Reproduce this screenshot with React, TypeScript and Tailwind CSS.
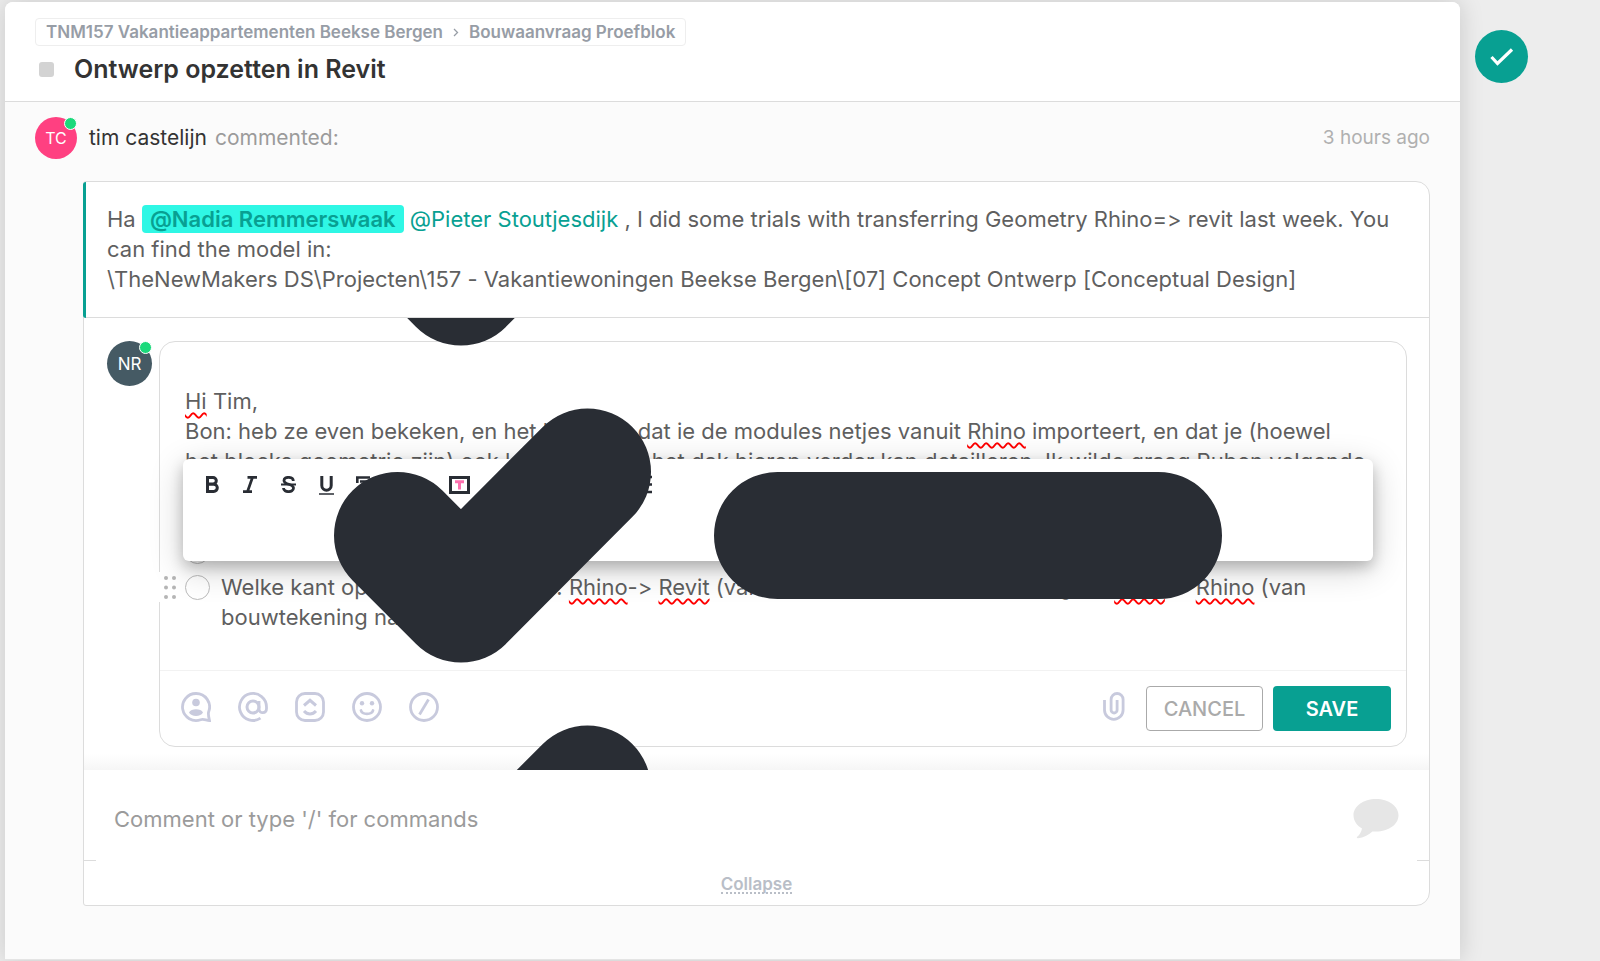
import React from 'react';

const Avatar: React.FC<{ initials: string; className: string }> = ({ initials, className }) => (
  <div className={`relative flex shrink-0 items-center justify-center rounded-full text-white ${className}`}>
    {initials}
    <span className="absolute top-0 right-0 size-[13px] rounded-full border border-white bg-[#1bd97b]" />
  </div>
);

const Misspelled: React.FC<{ children: React.ReactNode }> = ({ children }) => (
  <span className="underline decoration-[#ff0000] decoration-wavy decoration-2 underline-offset-3 [text-decoration-skip-ink:none]">
    {children}
  </span>
);

const CheckItem: React.FC<{ label: string; children?: React.ReactNode }> = ({ label, children }) => (
  <div className="flex min-h-[30px] items-start">
    <input
      type="checkbox"
      aria-label={label}
      className="mt-[3px] size-[25px] shrink-0 appearance-none rounded-full border border-[#bbbbbb] bg-white"
    />
    <div className="ml-[11px]">{children}</div>
  </div>
);

const icons = [
  {
    name: 'Assign',
    drawing: (
      <>
        <path d="M15 1.5a13.5 13.5 0 1 0 4.6 26.2c2.6-1 5 .4 8.9.8-.8-3-1.6-6-.9-8.500A13.5 13.5 0 0 0 15 1.5Z" strokeWidth="2.8" />
        <circle cx="15" cy="10.5" r="3.8" fill="currentColor" stroke="none" />
        <path d="M8 20.500c2-4.300 12-4.300 14 0-2 4.500-12 4.500-14 0Z" fill="currentColor" stroke="none" />
      </>
    ),
  },
  {
    name: 'Mention',
    drawing: (
      <>
        <circle cx="15" cy="15" r="6" strokeWidth="3" />
        <path d="M21 9v8c0 5 7.5 5 7.5-.5V15A13.5 13.5 0 1 0 22.5 26.2" strokeWidth="2.8" />
      </>
    ),
  },
  {
    name: 'Link task',
    drawing: (
      <>
        <rect x="1.5" y="1.5" width="27" height="27" rx="8.5" strokeWidth="2.8" />
        <path d="m9 13.500 6-5.200 6 5.200M9 19c3.500 4 8.500 4 12 0" strokeWidth="3" />
      </>
    ),
  },
  {
    name: 'Emoji',
    drawing: (
      <>
        <circle cx="15" cy="15" r="13.5" strokeWidth="2.8" />
        <circle cx="10" cy="11.3" r="2.2" fill="currentColor" stroke="none" />
        <circle cx="20" cy="11.3" r="2.2" fill="currentColor" stroke="none" />
        <path d="M9 18.500c1.200 4.400 10.800 4.400 12 0" strokeWidth="2.8" strokeLinecap="round" />
      </>
    ),
  },
  {
    name: 'Slash commands',
    drawing: (
      <>
        <circle cx="15" cy="15" r="13.5" strokeWidth="2.8" />
        <path d="m10.500 22.500 9-15" strokeWidth="2.8" />
      </>
    ),
  },
];

const toolButton = 'flex h-[51px] w-[38px] items-center justify-center';

const FormatToolbar: React.FC = () => (
  <div className="absolute top-[141px] right-14 left-[99px] flex h-[102px] items-start rounded-md bg-white pl-[10px] text-[#292d34] shadow-[0_8px_34px_rgba(0,0,0,0.2),0_6px_14px_rgba(0,0,0,0.2)]">
    <button aria-label="Bold" className={toolButton}>
      <svg width="14" height="17" viewBox="0 0 14 17" fill="none" stroke="currentColor" strokeWidth="3">
        <path d="M2.500 1.500h5.500a3.300 3.300 0 0 1 0 6.600H2.500M2.500 8.200h6.200a3.500 3.500 0 0 1 0 7.200H2.500M2.500 0v17" />
      </svg>
    </button>
    <button aria-label="Italic" className={toolButton}>
      <svg width="14" height="17" viewBox="0 0 14 17" fill="none" stroke="currentColor" strokeWidth="2.8">
        <path d="M4.500 1.400H14M0 15.600h9M9.500 1.400l-5 14.200" />
      </svg>
    </button>
    <button aria-label="Strikethrough" className={toolButton}>
      <svg width="15" height="17" viewBox="0 0 15 17" fill="none" stroke="currentColor">
        <path d="M12.300 5c0-4.700-9.300-4.800-9.300-.6 0 4.600 9.500 3.100 9.500 7.700 0 4.700-10 4.700-10 0" strokeWidth="2.8" />
        <path d="M0 8.500h15" strokeWidth="2" />
      </svg>
    </button>
    <button aria-label="Underline" className={toolButton}>
      <svg width="15" height="20" viewBox="0 0 15 20" fill="none" stroke="currentColor">
        <path d="M2.800 1v9.500c0 6.200 9.400 6.200 9.400 0V1" strokeWidth="3" />
        <path d="M0 19h15" strokeWidth="1.5" />
      </svg>
    </button>
    <button aria-label="Code block" className={toolButton}>
      <svg width="16" height="18" viewBox="0 0 16 18" fill="none" stroke="currentColor" strokeWidth="2.6">
        <path d="M0 1.500h14M4 5.500h10M1.300 1v6" />
      </svg>
    </button>
    <button aria-label="Text color" className="ml-[57px] flex h-[51px] w-[38px] items-center justify-center">
      <svg width="21" height="18" viewBox="0 0 21 18" fill="none">
        <rect x="1.5" y="1.5" width="18" height="15" stroke="currentColor" strokeWidth="3" />
        <path d="M6 5.700h9M10.500 4.500v9" stroke="#fd71af" strokeWidth="3" />
      </svg>
    </button>
    <button aria-label="List" className="ml-[145px] flex h-[51px] w-[38px] items-center justify-center">
      <svg width="20" height="19" viewBox="0 0 20 19" stroke="currentColor" strokeWidth="2.6">
        <path d="M0 2h20M0 9.500h20M0 17h20" />
      </svg>
    </button>
  </div>
);

// Checklist glyph drawn far larger than its button, cut off by the thread's edges
const ChecklistGlyph: React.FC = () => (
  <svg
    className="pointer-events-none absolute inset-0 size-full text-[#292d34]"
    fill="none"
    stroke="currentColor"
    strokeWidth="127"
    strokeLinecap="round"
    strokeLinejoin="round"
  >
    <path d="M313.500-99.500 377-36l126.500-127" />
    <path d="M313.500 217.500 377 281l126.500-127M693.500 217.500h381" />
    <path d="M313.500 534.500 377 598l126.500-127" />
  </svg>
);

const App: React.FC = () => {
  return (
    <div className="flex min-h-screen bg-[#ededed] pt-0.5 pb-px pl-[5px] font-['Inter',sans-serif] text-[22px] leading-[30px] text-[#5f5f5f] [font-feature-settings:'calt'_0]">
      <main className="min-w-0 flex-1 rounded-t-lg border-b border-[#e4e4e4] bg-[#fbfbfb] shadow-[0_0_24px_rgba(0,0,0,0.16)]">
        <header className="rounded-t-lg border-b border-[#dcdcdc] bg-white px-[30px] pt-4 pb-4">
          <nav className="flex h-7 w-fit items-center gap-[10px] rounded border border-[#eeeeee] px-[10px] text-[17px] font-semibold text-[#979da6]">
            <a href="#project">TNM157 Vakantieappartementen Beekse Bergen</a>
            <svg width="6" height="9" viewBox="0 0 6 9" fill="none" stroke="currentColor" strokeWidth="1.3">
              <path d="m1 1 3.500 3.500L1 8" />
            </svg>
            <a href="#list">Bouwaanvraag Proefblok</a>
          </nav>
          <div className="mt-[7px] flex h-8 items-center gap-5 pl-1">
            <span className="size-[15px] rounded-[3px] bg-[#d3d3d3]" />
            <h1 className="text-[25px] font-semibold text-[#333333]">Ontwerp opzetten in Revit</h1>
          </div>
        </header>

        <div className="flex items-center px-[30px] pt-[15px] pb-[22px] text-[21px]">
          <Avatar initials="TC" className="size-[42px] bg-[#ff4081] text-[16px]" />
          <span className="ml-3 text-[#333333]">tim castelijn</span>
          <span className="ml-2 text-[#9b9b9b]">commented:</span>
          <time className="ml-auto text-[19px] text-[#b0b0b0]">3 hours ago</time>
        </div>

        <section className="mr-[30px] mb-[53px] ml-[78px] rounded-l-[3px] rounded-r-[14px] border border-[#dcdcdc] bg-white">
          <div className="-ml-px rounded-l-[3px] rounded-tr-[14px] border-l-3 border-[#08a092]">
            <div className="border-b border-[#dcdcdc] pt-[22px] pr-5 pb-[23px] pl-[21px]">
              <p>
                Ha{' '}
                <a href="#nadia" className="rounded bg-[#2ff7e5] px-2 py-px font-semibold text-[#08a092]">
                  @Nadia Remmerswaak
                </a>{' '}
                <a href="#pieter" className="text-[#08a092]">
                  @Pieter Stoutjesdijk
                </a>{' '}
                , I did some trials with transferring Geometry Rhino=&gt; revit last week. You
                <br />
                can find the model in:
              </p>
              <p>\TheNewMakers DS\Projecten\157 - Vakantiewoningen Beekse Bergen\[07] Concept Ontwerp [Conceptual Design]</p>
            </div>
          </div>

          <div className="relative flex items-start overflow-hidden bg-[linear-gradient(to_top,#f6f6f6,#ffffff_16px)] py-[23px] pr-[22px] pl-[23px]">
            <Avatar initials="NR" className="size-[45px] bg-[#455a64] text-[17px]" />

            <div className="ml-[7px] min-w-0 flex-1 rounded-[16px] border border-[#dcdcdc] bg-white">
              <div role="textbox" aria-label="Comment" className="pt-11 pr-[26px] pb-[38px] pl-[25px]">
                <p>
                  <Misspelled>Hi</Misspelled> Tim,
                </p>
                <p className="whitespace-nowrap">
                  Bon: heb ze even bekeken, en het lijkt erop dat ie de modules netjes vanuit <Misspelled>Rhino</Misspelled> importeert, en dat je (hoewel
                  <br />
                  het blocks geometrie zijn) ook keurig mee in het dak hierop verder kan detailleren. Ik wilde graag Ruben volgende
                </p>
                <ul className="mt-[60px] flex flex-col gap-[6px]">
                  <li>
                    <CheckItem label="First question" />
                  </li>
                  <li className="flex items-start">
                    <button aria-label="Move item" className="-ml-[27px] flex h-[30px] w-[27px] items-center bg-white pl-[5px]">
                      <svg width="14" height="23" viewBox="0 0 14 23" fill="#b5b5b5">
                        <circle cx="3" cy="2" r="2" />
                        <circle cx="11" cy="2" r="2" />
                        <circle cx="3" cy="11.5" r="2" />
                        <circle cx="11" cy="11.5" r="2" />
                        <circle cx="3" cy="21" r="2" />
                        <circle cx="11" cy="21" r="2" />
                      </svg>
                    </button>
                    <CheckItem label="Second question">
                      <p className="whitespace-nowrap">
                        Welke kant op werken we straks. <Misspelled>Rhino</Misspelled>-&gt; <Misspelled>Revit</Misspelled> (van 3D model naar bouwtekening) of{' '}
                        <Misspelled>Revit</Misspelled>-&gt; <Misspelled>Rhino</Misspelled> (van
                        <br />
                        bouwtekening naar model)
                      </p>
                    </CheckItem>
                  </li>
                </ul>
              </div>

              <div className="flex h-[76px] items-center border-t border-[#f2f2f2] pr-[15px] pl-[21px]">
                <div className="flex gap-[27px] pb-1 text-[#c8cadd]">
                  {icons.map((icon) => (
                    <button key={icon.name} aria-label={icon.name}>
                      <svg width="30" height="30" viewBox="0 0 30 30" fill="none" stroke="currentColor">
                        {icon.drawing}
                      </svg>
                    </button>
                  ))}
                </div>
                <button aria-label="Attach file" className="ml-auto pb-1 text-[#c8cadd]">
                  <svg width="22" height="29" viewBox="0 0 22 29" fill="none" stroke="currentColor" strokeWidth="2.8">
                    <path d="M1.500 8v10a9.200 9.200 0 0 0 18.600 0V7.500a6 6 0 0 0-12 0V18a3 3 0 0 0 6 0V8" />
                  </svg>
                </button>
                <button className="ml-[21px] h-[45px] w-[117px] rounded border border-[#aaaaaa] text-[20px] font-medium text-[#aaaaaa]">CANCEL</button>
                <button className="ml-[10px] h-[45px] w-[118px] rounded bg-[#08a092] text-[20px] font-semibold text-white">SAVE</button>
              </div>
            </div>

            <FormatToolbar />
            <ChecklistGlyph />
          </div>

          <form className="flex h-[90px] items-center pr-[30px] pl-[30px]">
            <input
              type="text"
              aria-label="Comment or type '/' for commands"
              placeholder="Comment or type '/' for commands"
              className="h-[50px] flex-1 bg-transparent pt-2 outline-none placeholder:text-[#9b9b9b]"
            />
            <svg className="mt-2" width="46" height="40" viewBox="0 0 46 40" fill="#e6e6e6">
              <path d="M23 0C10.300 0 .5 7.200.5 16.300c0 5.400 3.300 10.200 8.500 13.200-.7 3.600-2.400 6.300-4.800 8.300-.8.900-.3 1.500.9 1.400 5.400-.7 10.300-3.100 14.300-6.800 1.200.2 2.400.2 3.600.2 12.700 0 22.500-7.200 22.500-16.300S35.700 0 23 0Z" />
            </svg>
          </form>

          <div className="flex justify-between">
            <span className="h-px w-3 bg-[#dcdcdc]" />
            <span className="h-px w-3 bg-[#dcdcdc]" />
          </div>
          <div className="flex h-11 items-center justify-center pt-1">
            <button className="border-b-2 border-dotted border-[#b9bec7] text-[17px] leading-4 font-semibold text-[#b9bec7]">Collapse</button>
          </div>
        </section>
      </main>

      <aside className="w-[140px] shrink-0 pt-7 pl-[15px]">
        <button aria-label="Complete task" className="flex size-[53px] items-center justify-center rounded-full bg-[#08a092]">
          <svg width="24" height="18" viewBox="0 0 24 18" fill="none" stroke="#ffffff" strokeWidth="3.2">
            <path d="m1.500 9 6 6.500L22 1.500" />
          </svg>
        </button>
      </aside>
    </div>
  );
};

export default App;
